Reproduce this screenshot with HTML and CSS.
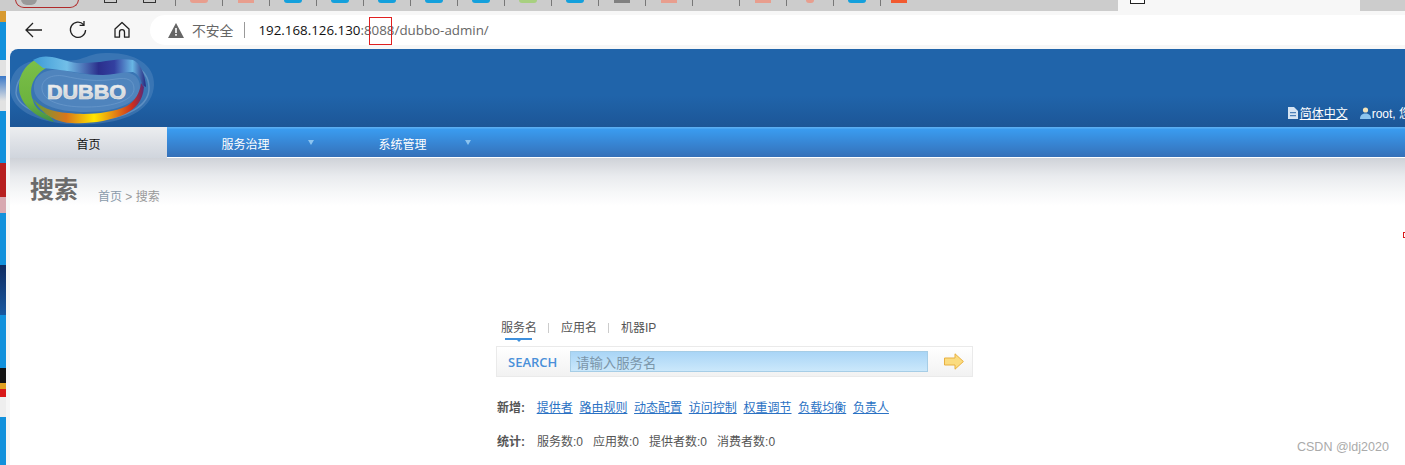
FILE: index.html
```html
<!DOCTYPE html>
<html lang="zh-CN">
<head>
  <meta charset="UTF-8" />
  <title>dubbo-admin</title>
  <link rel="stylesheet" href="styles.css">
</head>
<body>

<!-- Browser tabs, only the bottom of them is visible -->
<div class="tabstrip">
  <div class="profile"><span class="avatar"></span></div>
  <div class="tool-bits"><span class="bit"></span><span class="bit"></span></div>
  <div class="tab"><span class="fav round pink"></span></div>
  <div class="tab"><span class="fav square pink"></span></div>
  <div class="tab"><span class="fav round blue"></span></div>
  <div class="tab"><span class="fav round blue"></span></div>
  <div class="tab"><span class="fav round blue"></span></div>
  <div class="tab"><span class="fav round blue"></span></div>
  <div class="tab"><span class="fav round blue"></span></div>
  <div class="tab"><span class="fav round green"></span></div>
  <div class="tab"><span class="fav round blue"></span></div>
  <div class="tab"><span class="fav square grey"></span></div>
  <div class="tab"><span class="fav square pink"></span></div>
  <div class="tab"></div>
  <div class="tab"><span class="fav square pink"></span></div>
  <div class="tab"><span class="fav round pink small"></span></div>
  <div class="tab"><span class="fav round blue"></span></div>
  <div class="tab last"><span class="fav square orange"></span></div>
  <div class="tab-active"><span class="fav-box"></span></div>
  <div class="tab-rest"></div>
</div>

<div class="screen">
  <div class="desktop"></div>

  <div class="browser">
    <div class="toolbar">
      <svg class="tool-icon" width="20" height="20" viewBox="0 0 20 20"><path d="M18 10H2M9 3l-7 7 7 7" fill="none" stroke="#222" stroke-width="1.3"/></svg>
      <svg class="tool-icon" width="20" height="20" viewBox="0 0 20 20"><path d="M15.6 4.6A7.6 7.6 0 1 0 17.6 10M16 1v4.4h-4.400" fill="none" stroke="#222" stroke-width="1.3"/></svg>
      <svg class="tool-icon" width="20" height="20" viewBox="0 0 20 20"><path d="M3 9l7-6.500L17 9v8.200h-4.500v-5a2.500 2.500 0 0 0-5 0v5H3z" fill="none" stroke="#222" stroke-width="1.300" stroke-linejoin="round"/></svg>
      <div class="omnibox">
        <svg class="warn" width="16" height="15" viewBox="0 0 16 15"><path d="M8 0l8 15H0z" fill="#666"/><path d="M7.200 5h1.600v5H7.200zM7.200 11h1.600v1.800H7.200z" fill="#fff"/></svg>
        <span class="insecure">不安全</span>
        <span class="omni-sep"></span>
        <span class="url"><b>192.168.126.130</b>:8088/dubbo-admin/</span>
      </div>
    </div>

    <div class="page">
      <div class="header">
        <svg class="logo" width="150" height="78" viewBox="0 0 150 78">
          <defs>
            <linearGradient id="rainbow" x1="0" x2="1" y1="0" y2="0">
              <stop offset="0" stop-color="#5f9f3c"/>
              <stop offset=".3" stop-color="#d9761a"/>
              <stop offset=".55" stop-color="#ffe600"/>
              <stop offset=".72" stop-color="#e58d12"/>
              <stop offset=".9" stop-color="#cc2b1e"/>
              <stop offset="1" stop-color="#5a2a78"/>
            </linearGradient>
            <linearGradient id="band" x1="0" x2="1" y1="0" y2="0">
              <stop offset="0" stop-color="#3d9ad6"/>
              <stop offset=".3" stop-color="#72bfe8"/>
              <stop offset=".58" stop-color="#2b2f8c"/>
              <stop offset=".72" stop-color="#3340a0"/>
              <stop offset=".88" stop-color="#68b6e4"/>
              <stop offset="1" stop-color="#26277e"/>
            </linearGradient>
            <linearGradient id="green" x1="0" x2="0" y1="0" y2="1">
              <stop offset="0" stop-color="#7cc04a"/>
              <stop offset=".7" stop-color="#6cb33e"/>
              <stop offset="1" stop-color="#3f8f4a"/>
            </linearGradient>
            <linearGradient id="steel" x1="0" x2="0" y1="0" y2="1">
              <stop offset="0" stop-color="#fafafa"/>
              <stop offset="1" stop-color="#c4c8cc"/>
            </linearGradient>
          </defs>
          <path d="M0 40C0 24 10 14 24 12 40 9 52 13 66 11 76 9 82 4 96 4 122 3 145 14 144 36 143 58 122 72 84 75 40 78 1 66 0 40Z" fill="#6f9bcb" opacity=".32"/>
          <path d="M6 44C6 28 18 18 38 16 62 13 78 18 96 15 118 11 138 18 139 38 140 56 118 70 82 71 44 72 8 62 6 44Z" fill="none" stroke="#8fb3d8" stroke-width="1.500" opacity=".45"/>
          <path d="M24 40C23 26 36 19 52 21 72 25 88 28 106 24 120 21 130 26 130 38 130 52 110 63 76 63 44 63 25 54 24 40Z" fill="#4f84bd"/>
          <path d="M32 40C31 30 42 25 54 27 72 31 88 33 106 30 117 28 124 31 124 40 124 50 106 58 76 58 48 58 33 51 32 40Z" fill="none" stroke="#6c9bcd" stroke-width="1" opacity=".7"/>
          <path d="M36 8C18 10 9 24 9 38 9 54 24 68 44 73L40 67C30 63 24 58 23 51 19 42 21 28 36 19Z" fill="url(#green)"/>
          <path d="M23 50C30 58 42 63 58 64 75 66 100 65 117 57 125 52 130 44 131 34L134 38C133 52 125 60 115 65 100 72 80 75 62 74 48 74 32 66 23 50Z" fill="url(#rainbow)"/>
          <path d="M23 11C30 7 36 7 42 8 53 10 63 15 73 14 80 14 85 13 90 13 101 11 113 9 123 11 130 14 135 24 136 38L132 36C131 30 128 25 123 23 112 23 102 26 93 26 85 26 77 25 70 24 58 22 46 20 33 19Z" fill="url(#band)"/>
          <text class="logo-text" x="37" y="50" textLength="79" lengthAdjust="spacingAndGlyphs" fill="url(#steel)" stroke="#e4e6e8" stroke-width=".7">DUBBO</text>
        </svg>
        <div class="user-links">
          <svg width="10" height="12" viewBox="0 0 10 12"><path d="M0 0h6l4 4v8H0z" fill="#d5e3f2"/><path d="M2 5h6v1.200H2zM2 8h6v1.200H2z" fill="#4d80b8"/></svg>
          <a class="lang" href="#">简体中文</a>
          <svg class="user-icon" width="11" height="12" viewBox="0 0 11 12"><circle cx="5.500" cy="3" r="2.600" fill="#f3e3b8"/><path d="M0 12c0-4 2.500-5.500 5.500-5.500S11 8 11 12z" fill="#8cc4ee"/></svg>
          <span>root, 您好</span>
        </div>
      </div>

      <div class="nav">
        <a class="nav-item active" href="#">首页</a>
        <a class="nav-item" href="#">服务治理<i class="caret"></i></a>
        <a class="nav-item" href="#">系统管理<i class="caret"></i></a>
      </div>

      <div class="content">
        <div class="page-head">
          <h1>搜索</h1>
          <div class="crumbs"><a href="#">首页</a> &gt; 搜索</div>
        </div>

        <div class="search-panel">
          <div class="search-tabs">
            <a class="search-tab current" href="#">服务名</a>
            <span class="tab-sep"></span>
            <a class="search-tab" href="#">应用名</a>
            <span class="tab-sep"></span>
            <a class="search-tab" href="#">机器IP</a>
          </div>
          <div class="search-box">
            <span class="search-label">SEARCH</span>
            <input class="search-input" type="text" placeholder="请输入服务名">
            <svg class="go" width="20" height="17" viewBox="0 0 20 17"><path d="M.5 5h10.500V.8L19.400 8.500 11 16.200V12H.5z" fill="#fbdc80" stroke="#e8b040"/></svg>
          </div>
          <div class="info-row">
            <b>新增:</b>
            <a href="#">提供者</a><a href="#">路由规则</a><a href="#">动态配置</a><a href="#">访问控制</a><a href="#">权重调节</a><a href="#">负载均衡</a><a href="#">负责人</a>
          </div>
          <div class="info-row stats">
            <b>统计:</b>
            <span>服务数:0</span><span>应用数:0</span><span>提供者数:0</span><span>消费者数:0</span>
          </div>
        </div>
      </div>
    </div>
  </div>
</div>

<!-- Things drawn on top of the screenshot -->
<div class="port-mark"></div>
<div class="edge-mark"></div>
<div class="watermark">CSDN @ldj2020</div>

</body>
</html>
```

FILE: styles.css
```css
* { box-sizing: border-box; margin: 0; padding: 0; }

html, body {
  width: 1405px;
  height: 465px;
  overflow: hidden;
}

body {
  position: relative;
  background: #fff;
  font-family: "Liberation Sans", "Noto Sans CJK SC", sans-serif;
  font-size: 12px;
  color: #555;
}

a { color: inherit; text-decoration: none; }

/* browser tabs */
.tabstrip {
  display: flex;
  height: 11px;
  background: #ccc;
  overflow: hidden;
}

.profile {
  width: 64px;
  height: 9px;
  margin-top: -1px;
  margin-left: 15px;
  border: 1px solid #b02a2a;
  border-top: none;
  border-radius: 0 0 14px 14px;
}

.avatar {
  display: block;
  width: 16px;
  height: 6px;
  margin-left: 5px;
  background: #999;
  border-radius: 0 0 8px 8px;
}

.tool-bits {
  display: flex;
  width: 96px;
  padding-left: 25px;
  gap: 26px;
}

.bit {
  width: 13px;
  height: 3px;
  border: 1px solid #333;
  border-top: none;
}

.tab {
  display: flex;
  justify-content: center;
  width: 47px;
  height: 6px;
  border-left: 1px solid #777;
}

.tab.last { width: 238px; justify-content: flex-start; padding-left: 10px; }

.fav { display: block; height: 3px; }
.fav.round { width: 18px; border-radius: 0 0 9px 9px; }
.fav.square { width: 16px; }
.fav.small { width: 8px; height: 3px; }
.fav.pink { background: #e89e8e; }
.fav.blue { background: #14a0dc; }
.fav.green { background: #a8d080; }
.fav.grey { background: #808080; }
.fav.orange { background: #f25a30; }

.tab-active {
  width: 242px;
  padding-left: 12px;
  background: #f7f7f7;
}

.fav-box {
  display: block;
  width: 15px;
  height: 4px;
  background: #fff;
  border: 1px solid #222;
  border-top: none;
}

.tab-rest {
  flex: 1;
  border-bottom-left-radius: 6px;
}

/* main row */
.screen { display: flex; height: 454px; }

.desktop {
  flex: none;
  width: 6px;
  background: linear-gradient(to bottom,
    #d89a30 0, #d89a30 11px,
    #1291dc 11px, #1291dc 49px,
    #e2e2e2 49px, #e2e2e2 65px,
    #3a78c8 65px, #e2e2e2 90px, #e2e2e2 100px,
    #1291dc 100px, #1291dc 152px,
    #b82020 152px, #b82020 186px,
    #d8a8b0 186px, #d8a8b0 202px,
    #1291dc 202px, #1291dc 254px,
    #0e2a60 254px, #1858a0 304px,
    #1291dc 304px, #1291dc 357px,
    #111 357px, #111 372px,
    #e0a020 372px, #e0a020 378px,
    #d81818 378px, #d81818 386px,
    #eee 386px, #eee 406px,
    #1291dc 406px, #1291dc 454px);
}

.browser {
  flex: 1;
  min-width: 0;
  background: #f6f6f6;
  overflow: hidden;
}

.toolbar {
  display: flex;
  align-items: center;
  height: 38px;
  padding-left: 18px;
  background: #f7f7f7;
}

.tool-icon { flex: none; margin-right: 24px; }

.omnibox {
  display: flex;
  flex: 1;
  align-items: center;
  height: 30px;
  margin-left: -6px;
  padding-left: 18px;
  background: #fff;
  border-radius: 15px 0 0 15px;
  font-size: 14px;
  color: #666;
}

.insecure { margin-left: 8px; font-size: 13.800px; }

.omni-sep {
  width: 1px;
  height: 16px;
  margin: 0 13px 0 11px;
  background: #999;
}

.url { font-family: "Open Sans", "Liberation Sans", sans-serif; font-size: 13.350px; color: #666; }
.url b { font-weight: 400; color: #111; }

/* page inside the browser, wider than the window */
.page {
  width: 1449px;
  margin-left: 4px;
  background: #fff;
  border-radius: 8px 0 0 0;
  overflow: hidden;
}

.header {
  display: flex;
  align-items: flex-end;
  justify-content: space-between;
  height: 78px;
  background: linear-gradient(to bottom, #2064aa 0, #2064aa 60%, #1c5697 100%);
}

.logo { flex: none; }
.logo-text { font-size: 21px; font-weight: 700; }

.user-links {
  display: flex;
  align-items: center;
  padding: 0 36px 6px 0;
  color: #fff;
}

.lang { margin-left: 2px; text-decoration: underline; }
.user-icon { margin: 0 1px 0 12px; }

.nav {
  display: flex;
  height: 31px;
  padding-top: 1px;
  background: linear-gradient(to bottom, #5aaef2 0, #5aaef2 1px, #3a9cf0 2px, #3570b8 30px, #fff 30px);
  background-color: #fff;
}

.nav-item {
  position: relative;
  width: 157px;
  height: 29px;
  line-height: 34px;
  text-align: center;
  color: #fff;
}

.nav-item.active {
  height: 31px;
  margin-top: -1px;
  line-height: 36px;
  color: #111;
  background: linear-gradient(to bottom, #eceef0 0, #dfe2e7 45%, #d0d5dd 100%);
}

.caret {
  position: absolute;
  top: 12px;
  right: 10px;
  border: 3.500px solid transparent;
  border-top: 5px solid #8cc4f0;
}

.content {
  height: 307px;
  background: linear-gradient(to bottom, #cfd2d8 0, #e9ebee 18px, #f6f7f8 34px, #fff 48px);
}

.page-head {
  display: flex;
  align-items: flex-end;
  height: 50px;
  padding-left: 20px;
}

.page-head h1 {
  font-size: 24px;
  line-height: 36px;
  font-weight: 700;
  color: #6b6b6b;
}

.crumbs {
  margin-left: 20px;
  padding-bottom: 4px;
  color: #999;
}

.crumbs a { color: #8a9aaa; }

.search-panel {
  width: 477px;
  margin: 110px auto 0;
}

.search-tabs {
  display: flex;
  align-items: center;
  height: 20px;
  padding-left: 5px;
  line-height: 20px;
}

.search-tab {
  position: relative;
  color: #555;
}

.search-tab.current::after {
  content: "";
  position: absolute;
  left: 4px;
  right: 5px;
  bottom: -2px;
  height: 2px;
  background: #3d8fdc;
}

.search-tab.current::before {
  content: "";
  position: absolute;
  left: 16px;
  bottom: -4px;
  border: 2px solid transparent;
  border-top-color: #3d8fdc;
  border-bottom: none;
}

.tab-sep {
  width: 1px;
  height: 10px;
  margin: 0 12px 0 11px;
  background: #ccc;
}

.search-box {
  display: flex;
  align-items: center;
  height: 31px;
  margin-top: 8px;
  padding: 0 10px 0 11px;
  background: linear-gradient(to bottom, #fff, #f2f2f2);
  border: 1px solid #eaeaea;
}

.search-label {
  flex: none;
  width: 62px;
  font-family: "Open Sans", "Liberation Sans", sans-serif;
  font-size: 13px;
  font-weight: 600;
  color: #4a90d9;
}

.search-input {
  flex: none;
  width: 358px;
  height: 21px;
  padding-left: 5px;
  border: 1px solid #a6cde6;
  background: linear-gradient(to bottom, #a9d5f6, #cbe8fb);
  font-family: "Noto Sans CJK SC", sans-serif;
  font-size: 13.400px;
  outline: none;
}

.search-input::placeholder { color: #7b96aa; }

.go { flex: none; margin-left: 16px; }

.info-row {
  display: flex;
  gap: 6.700px;
  height: 20px;
  margin-top: 21px;
  line-height: 20px;
}

.info-row b {
  width: 34px;
  margin-left: 1px;
  margin-right: -1px;
  color: #555;
}

.info-row a {
  color: #2b72c4;
  text-decoration: underline;
}

.stats { gap: 10px; margin-top: 14px; }
.stats b { margin-right: -4px; }

/* overlays */
.port-mark {
  position: absolute;
  left: 369px;
  top: 17px;
  width: 23px;
  height: 28px;
  border: 1px solid #e02020;
}

.edge-mark {
  position: absolute;
  left: 1403px;
  top: 232px;
  width: 4px;
  height: 6px;
  border: 1px solid #d81818;
}

.watermark {
  position: absolute;
  left: 1297px;
  top: 440px;
  font-size: 12.500px;
  line-height: 15px;
  color: #aaa;
}
```
